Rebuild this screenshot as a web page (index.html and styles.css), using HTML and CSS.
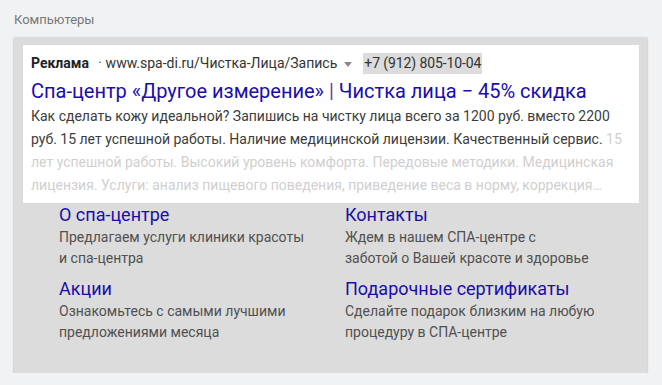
FILE: index.html
```html
<!DOCTYPE html>
<html lang="ru">
<head>
  <meta charset="UTF-8" />
  <meta name="viewport" content="width=device-width, initial-scale=1.0" />
  <title>Реклама</title>
  <link rel="stylesheet" href="styles.css">
</head>
<body>

  <div class="category">Компьютеры</div>

  <div class="ad-box">
    <div class="ad-card">
      <div class="ad-head">
        <span class="ad-label">Реклама</span>
        <span class="ad-dot">·</span>
        <span class="ad-url">www.spa-di.ru/Чистка-Лица/Запись</span>
        <span class="ad-arrow"></span>
        <span class="ad-phone">+7 (912) 805-10-04</span>
      </div>
      <a class="ad-title" href="#">Спа-центр «Другое измерение» <span class="pipe">|</span> Чистка лица − 45% скидка</a>
      <div class="ad-text">
        Как сделать кожу идеальной? Запишись на чистку лица всего за 1200 руб. вместо 2200<br>
        руб. 15 лет успешной работы. Наличие медицинской лицензии. Качественный сервис. <span class="faded">15<br>
        лет успешной работы. Высокий уровень комфорта. Передовые методики. Медицинская<br>
        лицензия. Услуги: анализ пищевого поведения, приведение веса в норму, коррекция…</span>
      </div>
    </div>

    <div class="sitelinks">
      <div class="sitelink">
        <a href="#">О спа-центре</a>
        <p>Предлагаем услуги клиники красоты<br>и спа-центра</p>
      </div>
      <div class="sitelink">
        <a href="#">Контакты</a>
        <p>Ждем в нашем СПА-центре с<br>заботой о Вашей красоте и здоровье</p>
      </div>
      <div class="sitelink">
        <a href="#">Акции</a>
        <p>Ознакомьтесь с самыми лучшими<br>предложениями месяца</p>
      </div>
      <div class="sitelink">
        <a href="#">Подарочные сертификаты</a>
        <p>Сделайте подарок близким на любую<br>процедуру в СПА-центре</p>
      </div>
    </div>
  </div>

</body>
</html>
```

FILE: styles.css
```css
html, body {
  margin: 0;
  padding: 0;
  background: #f1f2f4;
  font-family: Roboto, "Noto Sans", sans-serif;
}

body {
  padding: 10px 15px 0 14px;
}

.category {
  font-size: 13px;
  line-height: 20px;
  color: #777;
  margin-bottom: 7px;
}

.ad-box {
  background: #dcdcdc;
  padding: 8px 8px 0 9px;
  height: 336px;
  box-sizing: border-box;
  box-shadow: 0 1px 2px rgba(0, 0, 0, 0.35);
}

.ad-card {
  background: #fff;
  padding: 8px 8px 6px 8px;
}

.ad-head {
  display: flex;
  align-items: center;
  font-size: 14px;
  line-height: 21px;
  color: #333;
}

.ad-label {
  font-weight: bold;
  color: #222;
}

.ad-dot {
  margin: 0 4px 0 9px;
  color: #555;
}

.ad-arrow {
  width: 0;
  height: 0;
  border-left: 4px solid transparent;
  border-right: 4px solid transparent;
  border-top: 5px solid #888;
  margin: 1px 11px 0 7px;
}

.ad-phone {
  background: #dcdcdc;
  padding: 0 1px;
  letter-spacing: -0.1px;
}

.ad-title {
  display: block;
  font-size: 20px;
  line-height: 26px;
  color: #1a0dab;
  text-decoration: none;
  margin-top: 4px;
}

.pipe {
  color: #7a2fa8;
}

.ad-text {
  font-size: 14px;
  line-height: 23px;
  color: #3c3c3c;
  margin-top: 1px;
  white-space: nowrap;
  overflow: hidden;
}

.faded {
  color: #cfcfcf;
}

.sitelinks {
  display: grid;
  grid-template-columns: 286px 286px;
  row-gap: 9px;
  padding: 1px 0 0 36px;
}

.sitelink a {
  display: block;
  font-size: 18px;
  line-height: 22px;
  color: #1a0dab;
  text-decoration: none;
}

.sitelink p {
  margin: 1px 0 0;
  font-size: 14px;
  line-height: 21px;
  color: #505050;
}
```
